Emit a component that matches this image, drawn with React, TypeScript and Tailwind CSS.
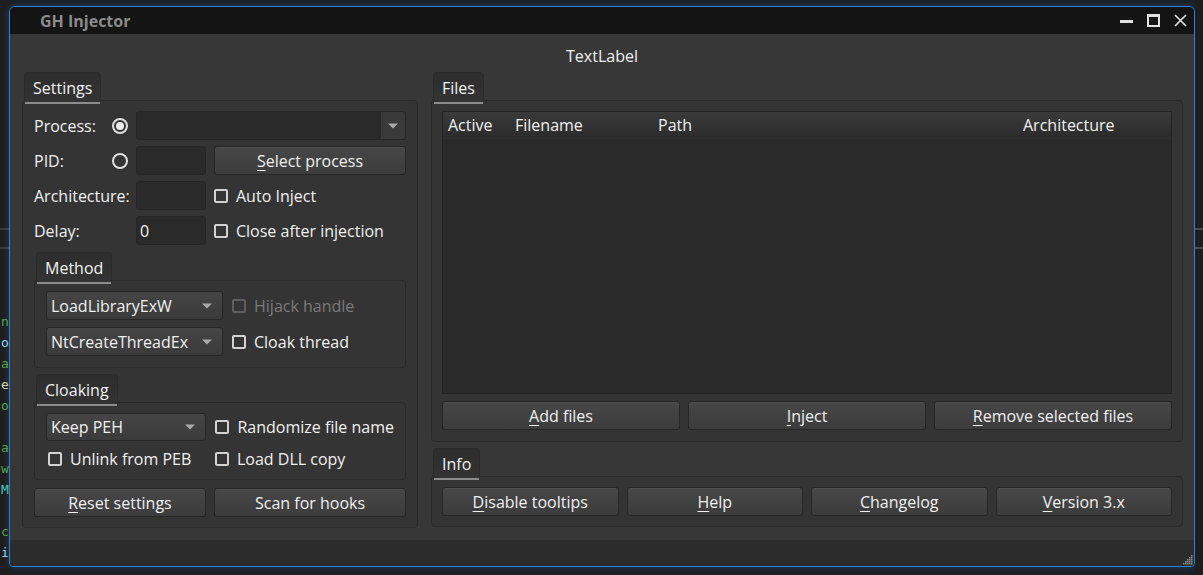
import React from 'react';

const Arrow = () => (
  <svg width="10" height="6" viewBox="0 0 10 6" className="shrink-0">
    <path d="M0 0.5 L10 0.5 L5 5.5 Z" fill="#a9a9a9" />
  </svg>
);

const Check = ({ disabled }: { disabled?: boolean }) => (
  <span
    className={`inline-block w-[14px] h-[14px] rounded-[2px] border-2 shrink-0 ${
      disabled ? 'border-[#5e5e5e]' : 'border-[#d2d2d2]'
    }`}
  />
);

const Radio = ({ checked }: { checked?: boolean }) => (
  <span className="w-[16px] h-[16px] rounded-full border-2 border-[#dedede] flex items-center justify-center shrink-0">
    {checked && <span className="w-[8px] h-[8px] rounded-full bg-[#ececec]" />}
  </span>
);

const Btn = ({ children, className = '' }: { children: React.ReactNode; className?: string }) => (
  <div
    className={`h-[29px] flex items-center justify-center whitespace-nowrap rounded-[3px] border border-[#262626] bg-linear-to-b from-[#474747] to-[#3c3c3c] shadow-[inset_0_1px_0_rgba(255,255,255,0.04)] ${className}`}
  >
    {children}
  </div>
);

const Combo = ({ label, className = '' }: { label: string; className?: string }) => (
  <div
    className={`flex items-center justify-between whitespace-nowrap pl-[4px] pr-[10px] rounded-[3px] border border-[#262626] bg-linear-to-b from-[#454545] to-[#3b3b3b] ${className}`}
  >
    <span>{label}</span>
    <Arrow />
  </div>
);

const Tab = ({ label }: { label: string }) => (
  <div className="relative z-10 ml-[2px] -mb-[4px] self-start flex flex-col">
    <div className="h-[30px] px-[8px] flex items-center rounded-t-[4px] border border-b-0 border-[#2b2b2b] bg-linear-to-b from-[#2d2d2d] to-[#333333]">
      {label}
    </div>
    <div className="h-[2px] mx-[1px] bg-[#8c8c8c]" />
  </div>
);

const Input = ({ value = '', className = '' }: { value?: string; className?: string }) => (
  <div className={`h-[29px] w-[70px] flex items-center pl-[3px] rounded-[3px] border border-[#262626] bg-[#2a2a2a] ${className}`}>
    {value}
  </div>
);

const CheckLabel = ({ label, disabled }: { label: string; disabled?: boolean }) => (
  <div className={`flex items-center gap-[8px] whitespace-nowrap ${disabled ? 'text-[#7a7a7a]' : ''}`}>
    <Check disabled={disabled} />
    <span>{label}</span>
  </div>
);

const u = (s: string) => <span className="underline underline-offset-[3px] decoration-1">{s}</span>;

const codeLetters: { c: string; col: string }[] = [
  { c: 'n', col: 'text-[#57a64a]' },
  { c: 'o', col: 'text-[#9cdcfe]' },
  { c: 'a', col: 'text-[#57a64a]' },
  { c: 'e', col: 'text-[#dcdcaa]' },
  { c: 'o', col: 'text-[#57a64a]' },
  { c: '\u00a0', col: '' },
  { c: 'a', col: 'text-[#57a64a]' },
  { c: 'w', col: 'text-[#57a64a]' },
  { c: 'M', col: 'text-[#4ec9b0]' },
  { c: '\u00a0', col: '' },
  { c: 'c', col: 'text-[#57a64a]' },
  { c: 'i', col: 'text-[#9cdcfe]' },
];

export default function App() {
  return (
    <div className="w-[1203px] h-[575px] overflow-hidden flex bg-[#1c1f24] font-['Open_Sans','Noto_Sans',sans-serif] text-[16px] text-[#f0f0f0]">
      {/* desktop behind, left */}
      <div className="w-[9px] shrink-0 h-full bg-[#1e1e1e] flex flex-col overflow-hidden">
        <div className="mt-[228px] h-[2px] bg-[#3a3a3a]" />
        <div className="mt-[17px] h-[2px] bg-[#3a3a3a]" />
        <div className="mt-[62px] pl-[1px] flex flex-col font-['DejaVu_Sans_Mono',monospace] text-[13px] leading-[21px]">
          {codeLetters.map((l, i) => (
            <span key={i} className={l.col}>{l.c}</span>
          ))}
        </div>
      </div>

      {/* window */}
      <div className="mt-[6px] w-[1186px] h-[561px] shrink-0 flex flex-col border border-[#2a82da] rounded-t-[6px] rounded-b-[4px] overflow-hidden shadow-[0_0_6px_rgba(42,130,218,0.35)]">
        {/* title bar */}
        <div className="h-[27px] shrink-0 bg-[#141414] flex items-center justify-between pl-[30px] pr-[7px]">
          <span className="font-bold text-[16px] text-[#8b8b8b]">GH Injector</span>
          <div className="flex items-center gap-[14px]">
            <svg width="13" height="13" viewBox="0 0 13 13">
              <rect x="0" y="6" width="13" height="3" fill="#e2e2e2" />
            </svg>
            <svg width="13" height="13" viewBox="0 0 13 13">
              <rect x="1" y="1.5" width="11" height="10.5" fill="none" stroke="#e2e2e2" strokeWidth="2" />
              <rect x="0" y="0" width="13" height="3" fill="#e2e2e2" />
            </svg>
            <svg width="13" height="13" viewBox="0 0 13 13">
              <path d="M1 1 L12 12 M12 1 L1 12" stroke="#e2e2e2" strokeWidth="1.6" />
            </svg>
          </div>
        </div>

        {/* body */}
        <div className="h-[506px] shrink-0 bg-[#373737] flex flex-col pt-[12px] pl-[12px]">
          <div className="h-[20px] leading-[20px] text-center -ml-[12px]">TextLabel</div>
          <div className="mt-[6px] flex gap-[13px]">
            {/* Settings */}
            <div className="w-[396px] flex flex-col">
              <Tab label="Settings" />
              <div className="border border-[#2a2a2a] rounded-[4px] bg-[#343434] pt-[10px] pb-[10px] pl-[11px] pr-[11px] flex flex-col">
                <div className="flex flex-col gap-[6px]">
                  <div className="h-[29px] flex items-center">
                    <div className="w-[102px] flex items-center justify-between pr-[8px]">
                      <span>Process:</span>
                      <Radio checked />
                    </div>
                    <div className="flex-1 h-[29px] flex rounded-[3px] border border-[#262626] bg-[#2a2a2a] overflow-hidden">
                      <div className="flex-1" />
                      <div className="w-[24px] flex items-center justify-center bg-[#3a3a3a]">
                        <Arrow />
                      </div>
                    </div>
                  </div>
                  <div className="h-[29px] flex items-center">
                    <div className="w-[102px] flex items-center justify-between pr-[8px]">
                      <span>PID:</span>
                      <Radio />
                    </div>
                    <Input />
                    <Btn className="ml-[8px] flex-1">{u('S')}elect process</Btn>
                  </div>
                  <div className="h-[29px] flex items-center">
                    <div className="w-[102px] whitespace-nowrap">Architecture:</div>
                    <Input />
                    <div className="ml-[8px]">
                      <CheckLabel label="Auto Inject" />
                    </div>
                  </div>
                  <div className="h-[29px] flex items-center">
                    <div className="w-[102px]">Delay:</div>
                    <Input value="0" />
                    <div className="ml-[8px]">
                      <CheckLabel label="Close after injection" />
                    </div>
                  </div>
                </div>

                {/* Method */}
                <div className="mt-[7px] flex flex-col">
                  <Tab label="Method" />
                  <div className="border border-[#2a2a2a] rounded-[4px] bg-[#343434] pt-[10px] pb-[11px] px-[11px] flex flex-col gap-[7px]">
                    <div className="flex items-center gap-[9px]">
                      <Combo label="LoadLibraryExW" className="w-[177px] h-[29px]" />
                      <CheckLabel label="Hijack handle" disabled />
                    </div>
                    <div className="flex items-center gap-[9px]">
                      <Combo label="NtCreateThreadEx" className="w-[177px] h-[29px]" />
                      <CheckLabel label="Cloak thread" />
                    </div>
                  </div>
                </div>

                {/* Cloaking */}
                <div className="mt-[6px] flex flex-col">
                  <Tab label="Cloaking" />
                  <div className="border border-[#2a2a2a] rounded-[4px] bg-[#343434] pt-[10px] pb-[10px] px-[11px] flex flex-col">
                    <div className="flex items-center gap-[9px]">
                      <Combo label="Keep PEH" className="w-[161px] h-[28px]" />
                      <CheckLabel label="Randomize file name" />
                    </div>
                    <div className="mt-[8px] h-[20px] flex items-center">
                      <div className="w-[169px] pl-[2px]">
                        <CheckLabel label="Unlink from PEB" />
                      </div>
                      <CheckLabel label="Load DLL copy" />
                    </div>
                  </div>
                </div>

                <div className="mt-[8px] flex gap-[8px]">
                  <Btn className="w-[172px]">{u('R')}eset settings</Btn>
                  <Btn className="flex-1">Scan for hooks</Btn>
                </div>
              </div>
            </div>

            {/* Files + Info */}
            <div className="w-[752px] flex flex-col">
              <Tab label="Files" />
              <div className="border border-[#2a2a2a] rounded-[4px] bg-[#343434] pt-[10px] pb-[11px] px-[10px] flex flex-col">
                <div className="h-[283px] w-[730px] border border-[#232323] bg-[#2a2a2a] flex flex-col">
                  <div className="h-[27px] flex items-center border-b border-[#2f2f2f] bg-linear-to-b from-[#3a3a3a] to-[#2b2b2b]">
                    <div className="w-[67px] pl-[5px]">Active</div>
                    <div className="w-[143px] pl-[5px]">Filename</div>
                    <div className="w-[365px] pl-[5px]">Path</div>
                    <div className="flex-1 pl-[5px]">Architecture</div>
                  </div>
                </div>
                <div className="mt-[7px] flex gap-[8px]">
                  <Btn className="flex-1">{u('A')}dd files</Btn>
                  <Btn className="flex-1">{u('I')}nject</Btn>
                  <Btn className="flex-1">{u('R')}emove selected files</Btn>
                </div>
              </div>

              <div className="mt-[6px] flex flex-col">
                <Tab label="Info" />
                <div className="border border-[#2a2a2a] rounded-[4px] bg-[#343434] pt-[10px] pb-[10px] px-[10px] flex gap-[8px]">
                  <Btn className="flex-1">{u('D')}isable tooltips</Btn>
                  <Btn className="flex-1">{u('H')}elp</Btn>
                  <Btn className="flex-1">{u('C')}hangelog</Btn>
                  <Btn className="flex-1">{u('V')}ersion 3.x</Btn>
                </div>
              </div>
            </div>
          </div>
        </div>

        {/* status bar */}
        <div className="flex-1 bg-[#2c2c2c] flex items-end justify-end pr-[1px] pb-[1px]">
          <svg width="10" height="10" viewBox="0 0 10 10">
            {[
              [8, 0], [6, 2], [8, 2], [4, 4], [6, 4], [8, 4], [2, 6], [4, 6], [6, 6], [8, 6], [0, 8], [2, 8], [4, 8], [6, 8], [8, 8],
            ].map(([x, y], i) => (
              <rect key={i} x={x} y={y} width="1.5" height="1.5" fill="#8a8a8a" />
            ))}
          </svg>
        </div>
      </div>

      {/* desktop behind, right */}
      <div className="flex-1 h-full bg-[#1e1e1e] flex flex-col">
        <div className="mt-[228px] h-[2px] bg-[#4a4a4a]" />
        <div className="mt-[17px] h-[2px] bg-[#4a4a4a]" />
      </div>
    </div>
  );
}
